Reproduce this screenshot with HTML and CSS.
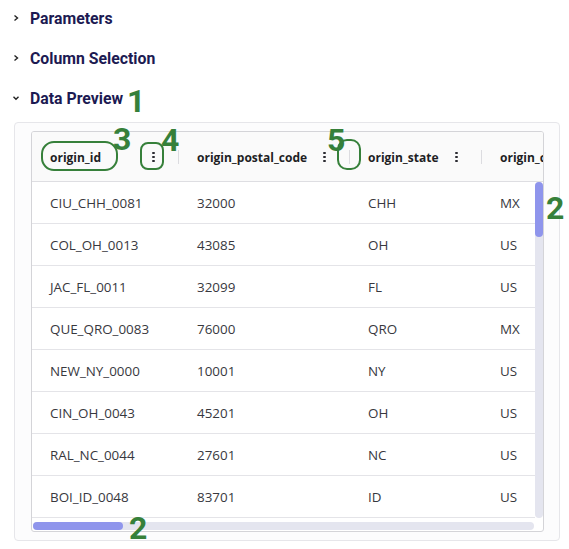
FILE: index.html
```html
<!DOCTYPE html>
<html>
<head>
<meta charset="utf-8">
<link rel="stylesheet" href="styles.css">
</head>
<body>
<div class="page">
  <div class="section">
    <svg class="chev" viewBox="0 0 8 8" width="8" height="8"><path d="M2.5 1.5 L5.5 4 L2.5 6.5" fill="none" stroke="#222" stroke-width="1.4"/></svg>
    <span class="title">Parameters</span>
  </div>
  <div class="section">
    <svg class="chev" viewBox="0 0 8 8" width="8" height="8"><path d="M2.5 1.5 L5.5 4 L2.5 6.5" fill="none" stroke="#222" stroke-width="1.4"/></svg>
    <span class="title">Column Selection</span>
  </div>
  <div class="section">
    <svg class="chev" viewBox="0 0 8 8" width="8" height="8"><path d="M1.5 2.8 L4 5.3 L6.5 2.8" fill="none" stroke="#222" stroke-width="1.4"/></svg>
    <span class="title">Data Preview</span>
  </div>

  <div class="card">
    <div class="table">
      <div class="thead">
        <div class="th c1"><span class="hlabel">origin_id</span><span class="dots"><i></i><i></i><i></i></span><span class="sep"></span></div>
        <div class="th c2"><span class="hlabel">origin_postal_code</span><span class="dots"><i></i><i></i><i></i></span><span class="sep"></span></div>
        <div class="th c3"><span class="hlabel">origin_state</span><span class="dots"><i></i><i></i><i></i></span><span class="sep"></span></div>
        <div class="th c4"><span class="hlabel">origin_country</span></div>
      </div>
      <div class="tbody">
        <div class="rows">
          <div class="tr"><div class="td c1">CIU_CHH_0081</div><div class="td c2">32000</div><div class="td c3">CHH</div><div class="td c4">MX</div></div>
          <div class="tr"><div class="td c1">COL_OH_0013</div><div class="td c2">43085</div><div class="td c3">OH</div><div class="td c4">US</div></div>
          <div class="tr"><div class="td c1">JAC_FL_0011</div><div class="td c2">32099</div><div class="td c3">FL</div><div class="td c4">US</div></div>
          <div class="tr"><div class="td c1">QUE_QRO_0083</div><div class="td c2">76000</div><div class="td c3">QRO</div><div class="td c4">MX</div></div>
          <div class="tr"><div class="td c1">NEW_NY_0000</div><div class="td c2">10001</div><div class="td c3">NY</div><div class="td c4">US</div></div>
          <div class="tr"><div class="td c1">CIN_OH_0043</div><div class="td c2">45201</div><div class="td c3">OH</div><div class="td c4">US</div></div>
          <div class="tr"><div class="td c1">RAL_NC_0044</div><div class="td c2">27601</div><div class="td c3">NC</div><div class="td c4">US</div></div>
          <div class="tr"><div class="td c1">BOI_ID_0048</div><div class="td c2">83701</div><div class="td c3">ID</div><div class="td c4">US</div></div>
        </div>
        <div class="vscroll"><div class="vthumb"></div></div>
      </div>
      <div class="hscroll"><div class="htrack"><div class="hthumb"></div></div></div>
    </div>
  </div>

  <span class="num n1">1</span>
  <span class="num n2a">2</span>
  <span class="num n2b">2</span>
  <span class="num n3">3</span>
  <span class="num n4">4</span>
  <span class="num n5">5</span>
  <div class="ring r3"></div>
  <div class="ring r4"></div>
  <div class="ring r5"></div>
</div>
</body>
</html>
```
FILE: styles.css
```css
html, body {
  margin: 0;
  padding: 0;
  background: #ffffff;
}
.page {
  position: relative;
  width: 569px;
  height: 549px;
  overflow: hidden;
  padding-top: 8px;
  box-sizing: border-box;
  font-family: "Open Sans", "Noto Sans", sans-serif;
}
.section {
  display: flex;
  align-items: center;
  height: 20px;
  margin-bottom: 20px;
  padding-left: 12px;
}
.section:nth-child(3) {
  margin-bottom: 14px;
}
.chev {
  display: block;
  margin-right: 10px;
}
.title {
  font-family: Roboto, "Liberation Sans", sans-serif;
  font-weight: 700;
  font-size: 15.8px;
  color: #1c1a52;
}
.card {
  margin-left: 14px;
  width: 546px;
  height: 419px;
  box-sizing: border-box;
  border: 1px solid #e6e6ea;
  border-radius: 4px;
  background: #fcfcfd;
  padding: 8px 16px 0 16px;
}
.table {
  width: 513px;
  height: 401px;
  box-sizing: border-box;
  border: 1px solid #d4d4d8;
  border-radius: 3px;
  background: #ffffff;
  display: flex;
  flex-direction: column;
  overflow: hidden;
}
.thead {
  display: flex;
  height: 49px;
  flex: none;
  background: #fafafa;
  border-bottom: 1px solid #dedee2;
}
.th {
  display: flex;
  align-items: center;
  box-sizing: border-box;
  padding-left: 18px;
  padding-top: 1px;
  font-size: 12px;
  font-weight: 700;
  color: #1e1e24;
  white-space: nowrap;
  overflow: hidden;
}
.c1 { width: 147px; flex: none; }
.c2 { width: 171px; flex: none; }
.c3 { width: 132px; flex: none; }
.c4 { flex: 1; min-width: 0; }
.hlabel {
  flex: 1;
}
.dots {
  display: flex;
  flex-direction: column;
  gap: 1.5px;
  width: 3px;
  margin-right: 23px;
}
.dots i {
  display: block;
  width: 2.6px;
  height: 2.6px;
  border-radius: 50%;
  background: #2a2a30;
}
.sep {
  width: 1px;
  height: 14px;
  background: #dcdce0;
}
.tbody {
  display: flex;
  flex: none;
  height: 336px;
}
.rows {
  flex: 1;
  min-width: 0;
}
.tr {
  display: flex;
  height: 42px;
  box-sizing: border-box;
  border-bottom: 1px solid #e4e4e8;
}
.td {
  display: flex;
  align-items: center;
  box-sizing: border-box;
  padding-left: 18px;
  padding-top: 1px;
  font-size: 13.4px;
  color: #38383e;
  white-space: nowrap;
}
.vscroll {
  width: 8px;
  flex: none;
  background: #e4e5ef;
  border-radius: 4px;
}
.vthumb {
  height: 55px;
  background: #8f95ec;
  border-radius: 4px;
}
.hscroll {
  flex: 1;
  padding: 4px 9px 0 1px;
}
.htrack {
  height: 8px;
  background: #e4e5ef;
  border-radius: 4px;
}
.hthumb {
  width: 90px;
  height: 8px;
  background: #8f95ec;
  border-radius: 4px;
}
.num {
  position: absolute;
  font-family: Roboto, "Liberation Sans", sans-serif;
  font-weight: 700;
  font-size: 32px;
  line-height: 32px;
  color: #36803a;
}
.n1 { left: 127px; top: 85px; }
.n2a { left: 546px; top: 192px; }
.n2b { left: 129px; top: 512px; }
.n3 { left: 113px; top: 123px; }
.n4 { left: 161px; top: 124px; }
.n5 { left: 327px; top: 124px; }
.ring {
  position: absolute;
  box-sizing: border-box;
  border: 2.5px solid #36803a;
}
.r3 { left: 41px; top: 141px; width: 77px; height: 30px; border-radius: 13px; }
.r4 { left: 140px; top: 142px; width: 24px; height: 28px; border-radius: 8px; }
.r5 { left: 337px; top: 139px; width: 24px; height: 31px; border-radius: 10px; }
```
